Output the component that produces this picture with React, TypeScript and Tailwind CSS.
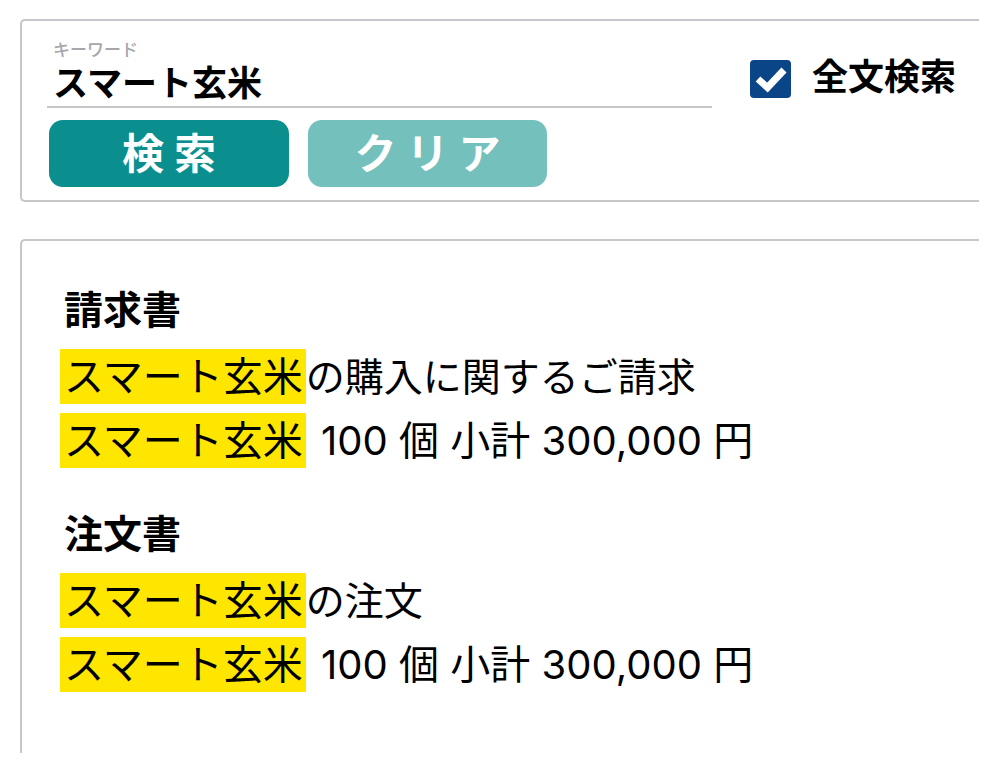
import React from "react";

const FONT = { fontFamily: 'Inter, "Noto Sans CJK JP", "Noto Sans", sans-serif' };

function Hl({ children }: { children: React.ReactNode }) {
  return (
    <span className="inline-block h-[55px] leading-[55px] bg-[#ffe600] pl-[4px] pr-[3px]">
      {children}
    </span>
  );
}

function Section({ title, line1 }: { title: string; line1: string }) {
  return (
    <div className="flex flex-col">
      <div className="h-[40px] leading-[40px] text-[39px] font-bold text-black pl-[42px]">{title}</div>
      <div className="mt-[19px] pl-[38px] flex flex-col gap-[9px] text-[40px] text-black">
        <div className="h-[55px] leading-[55px] whitespace-nowrap">
          <Hl>スマート玄米</Hl>
          <span className="text-[39px]">{line1}</span>
        </div>
        <div className="h-[55px] leading-[55px] whitespace-nowrap">
          <Hl>スマート玄米</Hl>
          <span className="ml-[4px]">{" "}100 個 小計 300,000 円</span>
        </div>
      </div>
    </div>
  );
}

export default function App() {
  return (
    <div className="w-[1000px] h-[775px] bg-white overflow-hidden" style={FONT}>
      <div className="pt-[19px] pl-[20px] w-[979px]">
        {/* Search card */}
        <div className="h-[183px] border-l-2 border-t-2 border-b-2 border-[#c6c6cb] rounded-l-[5px] flex">
          <div className="w-[700px] pl-[25px] pt-[20px] flex flex-col">
            <div className="w-[665px] h-[67px] border-b-2 border-[#c6c6cb] pl-[6px] flex flex-col">
              <div className="text-[17px] leading-[18px] font-medium text-[#a6a6ab] h-[18px]">キーワード</div>
              <div className="mt-[4px] text-[35px] leading-[40px] font-bold text-black">スマート玄米</div>
            </div>
            <div className="mt-[12px] flex gap-[19px] pl-[2px]">
              <button className="w-[240px] h-[67px] rounded-[14px] bg-[#0a8f8e] text-white text-[42px] font-bold tracking-[10px] leading-none pl-[10px]">
                検索
              </button>
              <button className="w-[239px] h-[67px] rounded-[14px] bg-[#73c0bc] text-white text-[42px] font-bold tracking-[10px] leading-none pl-[10px]">
                クリア
              </button>
            </div>
          </div>
          <div className="pl-[28px] pt-[39px] flex items-start">
            <div className="flex items-center gap-[21px]">
              <div className="w-[41px] h-[38px] rounded-[4px] bg-[#094587] flex items-center justify-center">
                <svg width="32" height="28" viewBox="0 0 32 28">
                  <path d="M3 14 L12.5 22.5 L29 5" fill="none" stroke="white" strokeWidth="7" strokeLinejoin="miter" />
                </svg>
              </div>
              <span className="text-[36px] font-bold text-black leading-[40px] -mt-[4px]">全文検索</span>
            </div>
          </div>
        </div>

        {/* Results card */}
        <div className="mt-[37px] h-[514px] border-l-2 border-t-2 border-[#c6c6cb] rounded-tl-[5px] pt-[49px]">
          <Section title="請求書" line1="の購入に関するご請求" />
          <div className="mt-[46px]">
            <Section title="注文書" line1="の注文" />
          </div>
        </div>
      </div>
    </div>
  );
}
